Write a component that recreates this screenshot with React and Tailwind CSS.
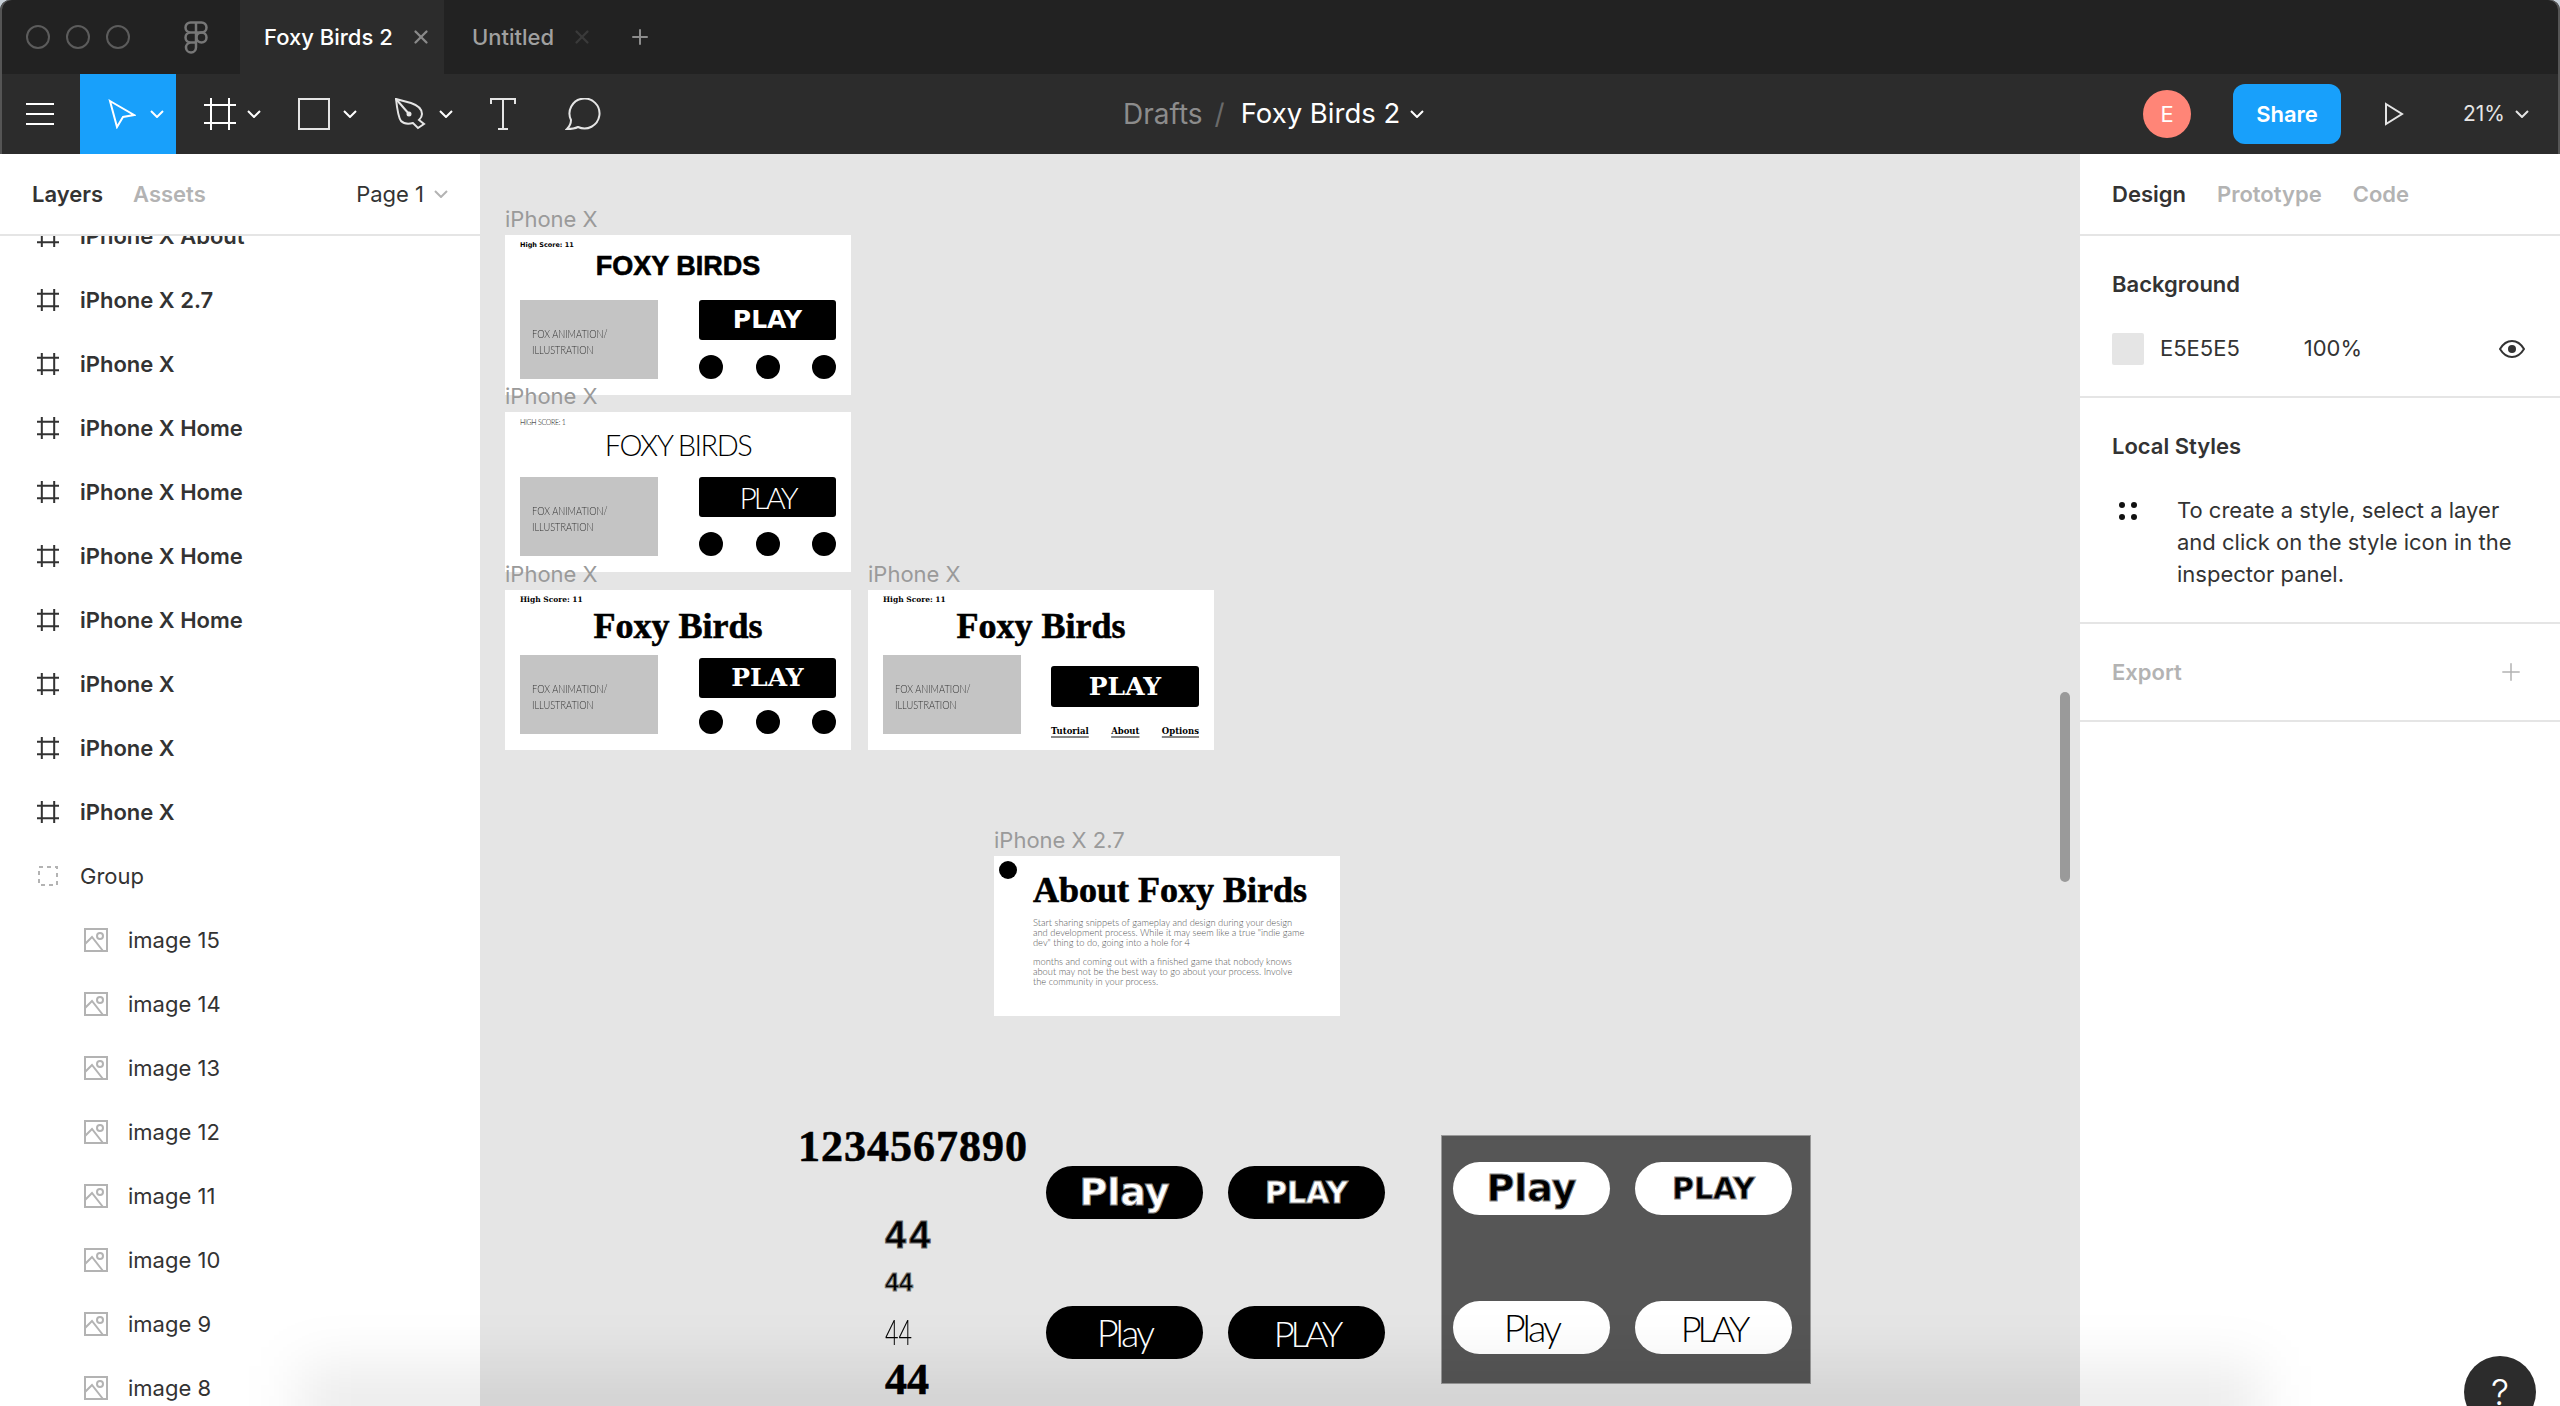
import { Plus, X } from "lucide-react";

const sans = "font-['Inter','Liberation_Sans',sans-serif]";
const heavy = "font-['DejaVu_Sans','Liberation_Sans',sans-serif] font-bold";
const heavySerif = "font-['DejaVu_Serif','Liberation_Serif',serif] font-bold";
const fatSerif = "font-['Liberation_Serif','DejaVu_Serif',serif] font-bold [-webkit-text-stroke:0.6px_#000]";
const fatSans = "font-['Liberation_Sans','DejaVu_Sans',sans-serif] font-bold [-webkit-text-stroke:0.6px_#000]";
const thin = "font-['Lato','Liberation_Sans',sans-serif] font-light";

const layers = [
  "iPhone X About",
  "iPhone X 2.7",
  "iPhone X",
  "iPhone X Home",
  "iPhone X Home",
  "iPhone X Home",
  "iPhone X Home",
  "iPhone X",
  "iPhone X",
  "iPhone X",
];
const images = ["image 15", "image 14", "image 13", "image 12", "image 11", "image 10", "image 9", "image 8"];

function Chevron({ className = "", color = "#fff" }) {
  return (
    <svg width="14" height="8" viewBox="0 0 14 8" fill="none" className={className}>
      <path d="M1 1l6 6 6-6" stroke={color} strokeWidth="2" />
    </svg>
  );
}

function FrameIcon({ size = 32, stroke = 2, color = "#fff" }) {
  return (
    <svg width={size} height={size} viewBox="0 0 32 32" fill="none" stroke={color} strokeWidth={stroke * (32 / size)}>
      <path d="M7 0v32M25 0v32M0 7h32M0 25h32" />
    </svg>
  );
}

function Layer({ name }) {
  return (
    <div className="h-16 shrink-0 flex items-center pl-[37px]">
      <FrameIcon size={22} color="#333" />
      <span className="ml-[21px] text-[22px] font-semibold text-[#333]">{name}</span>
    </div>
  );
}

function ImageLayer({ name }) {
  return (
    <div className="h-16 shrink-0 flex items-center pl-[84px]">
      <svg width="24" height="24" viewBox="0 0 24 24" fill="none" stroke="#b3b3b3" strokeWidth="2">
        <rect x="1" y="1" width="22" height="22" />
        <path d="M1 16l7-7 11 14" />
        <circle cx="16" cy="8" r="3" />
      </svg>
      <span className="ml-[20px] text-[22px] text-[#333]">{name}</span>
    </div>
  );
}

function Sidebar() {
  return (
    <aside className="w-[480px] shrink-0 bg-white flex flex-col overflow-hidden">
      <div className="relative z-10 h-[82px] shrink-0 bg-white border-b-2 border-[#e5e5e5] flex items-center pl-[32px] pr-[32px] text-[22px]">
        <span className="font-semibold text-[#333]">Layers</span>
        <span className="ml-[30px] font-semibold text-[#b3b3b3]">Assets</span>
        <span className="ml-auto text-[#333]">Page 1</span>
        <Chevron className="ml-[10px]" color="#b3b3b3" />
      </div>
      <div className="-mt-8 flex flex-col">
        {layers.map((name, i) => (
          <Layer key={i} name={name} />
        ))}
        <div className="h-16 shrink-0 flex items-center pl-[38px]">
          <svg width="20" height="20" viewBox="0 0 20 20" fill="none" stroke="#b3b3b3" strokeWidth="2" strokeDasharray="4 4">
            <rect x="1" y="1" width="18" height="18" />
          </svg>
          <span className="ml-[22px] text-[22px] text-[#333]">Group</span>
        </div>
        {images.map((name) => (
          <ImageLayer key={name} name={name} />
        ))}
      </div>
    </aside>
  );
}

function TitleBar() {
  return (
    <div className="h-[74px] shrink-0 bg-[#222] flex items-stretch text-[22px] font-medium">
      <div className="w-[240px] flex items-center pl-[26px] gap-[16px]">
        <span className="w-6 h-6 rounded-full border-2 border-[#5c5c5c]" />
        <span className="w-6 h-6 rounded-full border-2 border-[#5c5c5c]" />
        <span className="w-6 h-6 rounded-full border-2 border-[#5c5c5c]" />
        <svg width="24" height="33" viewBox="0 0 24 33" fill="none" stroke="#777" strokeWidth="2.5" className="ml-[38px]">
          <path d="M12 1.500H6.500a5 5 0 0 0 0 10H12zM12 1.500h5.500a5 5 0 0 1 0 10H12zM12 11.500H6.500a5 5 0 0 0 0 10H12zM12 21.500H6.500a5 5 0 1 0 5.500 5z" />
          <circle cx="17.500" cy="16.500" r="5" />
        </svg>
      </div>
      <div className="w-[204px] bg-[#2c2c2c] flex items-center pl-[24px] text-white">
        Foxy Birds 2
        <X size={22} strokeWidth={2.5} className="ml-[17px] text-[#8a8a8a]" />
      </div>
      <div className="flex items-center pl-[28px] text-[#a0a0a0]">
        Untitled
        <X size={22} strokeWidth={2.5} className="ml-[17px] text-[#3a3a3a]" />
        <Plus size={24} strokeWidth={2} className="ml-[35px] text-[#8c8c8c]" />
      </div>
    </div>
  );
}

function ToolBar() {
  return (
    <div className="relative h-20 shrink-0 bg-[#2c2c2c] flex items-center text-white">
      <div className="w-[80px] flex flex-col items-center gap-[8px]">
        <span className="w-[28px] h-[2px] bg-white" />
        <span className="w-[28px] h-[2px] bg-white" />
        <span className="w-[28px] h-[2px] bg-white" />
      </div>
      <div className="w-[96px] h-20 bg-[#18a0fb] flex items-center pl-[28px]">
        <svg width="28" height="30" viewBox="0 0 28 30" fill="none" stroke="#fff" strokeWidth="2">
          <path d="M2 2l24 14-11 2-6 10z" />
        </svg>
        <Chevron className="ml-[14px]" />
      </div>
      <div className="ml-[28px] flex items-center">
        <FrameIcon />
        <Chevron className="ml-[11px]" />
      </div>
      <span className="ml-[37px] w-[32px] h-[32px] border-2 border-[#e5e5e5]" />
      <Chevron className="ml-[13px]" />
      <svg width="31" height="32" viewBox="0 0 31 32" fill="none" stroke="#e5e5e5" strokeWidth="2" className="ml-[38px]">
        <path d="M1 1l15 4c6 2 11 6 11 11 0 3-2 5-3 6l5 4-6 4-5-5c-4 1-9 1-12-2C3 19 2 10 1 1z" />
        <path d="M1 1l13 15" />
        <circle cx="14" cy="16" r="2.500" fill="#e5e5e5" stroke="none" />
      </svg>
      <Chevron className="ml-[13px]" />
      <svg width="26" height="32" viewBox="0 0 26 32" fill="none" stroke="#e5e5e5" strokeWidth="2" className="ml-[37px]">
        <path d="M1 6V1h24v5M13 1v30M8 31h10" />
      </svg>
      <svg width="36" height="32" viewBox="0 0 36 32" fill="none" stroke="#e5e5e5" strokeWidth="2" className="ml-[49px]">
        <path d="M2 31c3-3 4-6 4-9a15 15 0 1 1 7 7c-4 2-7 2-11 2z" />
      </svg>

      <div className="absolute left-[1123px] top-0 h-20 flex items-center text-[28px]">
        <span className="text-[#8c8c8c]">Drafts</span>
        <span className="ml-[12px] text-[#6a6a6a]">/</span>
        <span className="ml-[16px] text-[27.500px]">Foxy Birds 2</span>
        <Chevron className="ml-[10px]" />
      </div>

      <div className="ml-auto flex items-center">
        <span className="w-12 h-12 rounded-full bg-[#ff8577] flex items-center justify-center text-[22px]">E</span>
        <span className="ml-[42px] w-[108px] h-[60px] rounded-[12px] bg-[#18a0fb] flex items-center justify-center text-[22px] font-semibold">
          Share
        </span>
        <svg width="20" height="24" viewBox="0 0 20 24" fill="none" stroke="#e5e5e5" strokeWidth="2" className="ml-[43px]">
          <path d="M2 2l16 10L2 22z" />
        </svg>
        <span className="ml-[59px] text-[21px] text-[#e5e5e5]">21%</span>
        <Chevron className="ml-[10px] mr-[31px]" color="#e5e5e5" />
      </div>
    </div>
  );
}

function GreyBox() {
  return (
    <div className={`w-[138px] h-[79px] shrink-0 bg-[#c4c4c4] pl-[12px] pt-[26px] text-[12px] leading-[16px] text-[#333] whitespace-nowrap ${thin}`}>
      <div className="origin-left scale-x-[0.77]">FOX ANIMATION/</div>
      <div className="origin-left scale-x-[0.77]">ILLUSTRATION</div>
    </div>
  );
}

function Dots() {
  return (
    <div className="mt-[15px] flex justify-between">
      <span className="w-6 h-6 rounded-full bg-black" />
      <span className="w-6 h-6 rounded-full bg-black" />
      <span className="w-6 h-6 rounded-full bg-black" />
    </div>
  );
}

function Frame({ pos, label, children }) {
  return (
    <div className={`absolute w-[346px] h-[160px] ${pos}`}>
      <div className="absolute -top-[30px] left-0 text-[22px] leading-[28px] text-[#9a9a9a] whitespace-nowrap z-10">{label}</div>
      {children}
    </div>
  );
}

function MenuScreen({ score, scoreClass, title, titleClass, play, playClass, buttonClass = "w-[137px] h-10", links }) {
  return (
    <div className="w-full h-full bg-white flex flex-col px-[15px]">
      <div className="h-[65px] shrink-0">
        <div className={`pt-[5px] leading-[10px] whitespace-nowrap ${scoreClass}`}>{score}</div>
        <div className={`text-center whitespace-nowrap ${titleClass}`}>{title}</div>
      </div>
      <div className="flex justify-between">
        <GreyBox />
        <div className="w-[137px] flex flex-col items-end">
          <div className={`${buttonClass} rounded-[3px] bg-black text-white flex items-center justify-center ${playClass}`}>{play}</div>
          {links ? (
            <div className={`w-[148px] shrink-0 mt-[18px] flex justify-between text-[8.500px] underline decoration-[#888] decoration-2 underline-offset-2 ${heavySerif}`}>
              <span>Tutorial</span>
              <span>About</span>
              <span>Options</span>
            </div>
          ) : (
            <div className="w-full">
              <Dots />
            </div>
          )}
        </div>
      </div>
    </div>
  );
}

function Pill({ pos, text, className }) {
  return (
    <div className={`absolute w-[157px] h-[53px] rounded-full flex items-center justify-center ${pos} ${className}`}>{text}</div>
  );
}

function Canvas() {
  return (
    <main className="relative flex-1 bg-[#e5e5e5] overflow-hidden text-black">
      {/* canvas offsets are relative to x=480, y=154 */}
      <Frame pos="left-[25px] top-[81px]" label="iPhone X">
        <MenuScreen
          score="High Score: 11"
          scoreClass={`text-[6.500px] ${heavy}`}
          title="FOXY BIRDS"
          titleClass={`text-[27px] leading-[32px] ${fatSans}`}
          play="PLAY"
          playClass={`text-[25px] ${heavy}`}
        />
      </Frame>
      <Frame pos="left-[25px] top-[258px]" label="iPhone X">
        <MenuScreen
          score="HIGH SCORE: 1"
          scoreClass={`text-[7px] tracking-[-0.300px] ${thin}`}
          title="FOXY BIRDS"
          titleClass={`text-[29px] leading-[36px] tracking-[-1.500px] ${thin}`}
          play="PLAY"
          playClass={`text-[30px] tracking-[-3px] ${thin}`}
        />
      </Frame>
      <Frame pos="left-[25px] top-[436px]" label="iPhone X">
        <MenuScreen
          score="High Score: 11"
          scoreClass={`text-[7.500px] ${heavySerif}`}
          title="Foxy Birds"
          titleClass={`text-[36px] leading-[42px] ${fatSerif}`}
          play="PLAY"
          playClass={`text-[25px] ${heavySerif}`}
          buttonClass="w-[137px] h-10 mt-[3px] -mb-[3px]"
        />
      </Frame>
      <Frame pos="left-[388px] top-[436px]" label="iPhone X">
        <MenuScreen
          score="High Score: 11"
          scoreClass={`text-[7.500px] ${heavySerif}`}
          title="Foxy Birds"
          titleClass={`text-[36px] leading-[42px] ${fatSerif}`}
          play="PLAY"
          playClass={`text-[25px] mt-[11px] ${heavySerif}`}
          buttonClass="w-[148px] h-[41px] shrink-0"
          links
        />
      </Frame>
      <Frame pos="left-[514px] top-[702px]" label="iPhone X 2.7">
        <div className="relative w-full h-full bg-white pl-[39px] pt-[15px]">
          <span className="absolute left-[5px] top-[5px] w-[18px] h-[18px] rounded-full bg-black" />
          <div className={`text-[36px] leading-[38px] whitespace-nowrap ${fatSerif}`}>About Foxy Birds</div>
          <div className="mt-[9px] text-[9.300px] leading-[9.800px] text-[#555] whitespace-nowrap font-['Lato',sans-serif] font-light">
            <div>Start sharing snippets of gameplay and design during your design</div>
            <div>and development process. While it may seem like a true "indie game</div>
            <div>dev" thing to do, going into a hole for 4</div>
            <div className="mt-[9.800px]">months and coming out with a finished game that nobody knows</div>
            <div>about may not be the best way to go about your process. Involve</div>
            <div>the community in your process.</div>
          </div>
        </div>
      </Frame>

      <div className={`absolute left-[318px] top-[970px] text-[44px] leading-[46px] tracking-[1px] whitespace-nowrap ${fatSerif}`}>
        1234567890
      </div>
      <div className={`absolute left-[405px] top-[1061px] text-[38px] leading-[40px] tracking-[3px] ${fatSans} [-webkit-text-stroke:1px_#666]`}>44</div>
      <div className={`absolute left-[405px] top-[1117px] text-[25px] leading-[22px] ${fatSans} [-webkit-text-stroke:1px_#777]`}>44</div>
      <div className={`absolute left-[405px] top-[1157px] text-[36px] leading-[40px] origin-left scale-x-[0.65] ${thin}`}>44</div>
      <div className={`absolute left-[405px] top-[1204px] text-[44px] leading-[44px] ${fatSerif}`}>44</div>

      <Pill pos="left-[566px] top-[1012px]" text="Play" className={`bg-black text-white text-[38px] [-webkit-text-stroke:1px_#888] ${heavy}`} />
      <Pill pos="left-[748px] top-[1012px]" text="PLAY" className={`bg-black text-white text-[30px] [-webkit-text-stroke:1px_#888] ${heavy}`} />
      <Pill pos="left-[566px] top-[1152px]" text="Play" className={`bg-black text-white text-[38px] tracking-[-3px] ${thin}`} />
      <Pill pos="left-[748px] top-[1152px]" text="PLAY" className={`bg-black text-white text-[36px] tracking-[-4px] ${thin}`} />

      <div className="absolute left-[961px] top-[981px] w-[370px] h-[249px] bg-[#565656] border border-[#999]" />
      <Pill pos="left-[973px] top-[1008px]" text="Play" className={`bg-white text-black text-[38px] [-webkit-text-stroke:1px_#888] ${heavy}`} />
      <Pill pos="left-[1155px] top-[1008px]" text="PLAY" className={`bg-white text-black text-[30px] [-webkit-text-stroke:1px_#888] ${heavy}`} />
      <Pill pos="left-[973px] top-[1147px]" text="Play" className={`bg-white text-black text-[38px] tracking-[-3px] ${thin}`} />
      <Pill pos="left-[1155px] top-[1147px]" text="PLAY" className={`bg-white text-black text-[36px] tracking-[-4px] ${thin}`} />

      <div className="absolute right-[10px] top-[538px] w-[10px] h-[190px] rounded-full bg-[#9a9a9a]" />
    </main>
  );
}

function RightPanel() {
  return (
    <aside className="relative w-[480px] shrink-0 bg-white flex flex-col text-[22px] text-[#333]">
      <div className="h-[82px] shrink-0 border-b-2 border-[#e5e5e5] flex items-center pl-[32px] font-semibold gap-[31px]">
        <span>Design</span>
        <span className="text-[#b3b3b3]">Prototype</span>
        <span className="text-[#b3b3b3]">Code</span>
      </div>
      <section className="h-[162px] shrink-0 border-b-2 border-[#e5e5e5] px-[32px] pt-[32px]">
        <div className="font-semibold leading-[32px]">Background</div>
        <div className="mt-[32px] flex items-center">
          <span className="w-8 h-8 rounded-[2px] bg-[#e5e5e5]" />
          <span className="ml-[16px]">E5E5E5</span>
          <span className="ml-[64px]">100%</span>
          <svg width="26" height="18" viewBox="0 0 26 18" fill="none" className="ml-auto mr-[3px]">
            <path d="M1 9c3-5 7-8 12-8s9 3 12 8c-3 5-7 8-12 8S4 14 1 9z" stroke="#333" strokeWidth="2" />
            <circle cx="13" cy="9" r="4" fill="#333" />
          </svg>
        </div>
      </section>
      <section className="h-[226px] shrink-0 border-b-2 border-[#e5e5e5] px-[32px] pt-[32px]">
        <div className="font-semibold leading-[32px]">Local Styles</div>
        <div className="mt-[32px] flex items-start">
          <div className="w-[18px] ml-[7px] mt-[8px] grid grid-cols-2 justify-between gap-y-[6px]">
            <span className="w-[6px] h-[6px] rounded-full bg-[#111]" />
            <span className="w-[6px] h-[6px] rounded-full bg-[#111] justify-self-end" />
            <span className="w-[6px] h-[6px] rounded-full bg-[#111]" />
            <span className="w-[6px] h-[6px] rounded-full bg-[#111] justify-self-end" />
          </div>
          <p className="ml-[40px] leading-[32px] whitespace-nowrap">
            To create a style, select a layer
            <br />
            and click on the style icon in the
            <br />
            inspector panel.
          </p>
        </div>
      </section>
      <section className="h-[98px] shrink-0 border-b-2 border-[#e5e5e5] pl-[32px] pr-[35px] flex items-center justify-between">
        <span className="font-semibold text-[#b3b3b3]">Export</span>
        <Plus size={28} strokeWidth={1.3} className="text-[#b3b3b3]" />
      </section>
      <div className="absolute z-20 right-[24px] bottom-[-22px] w-[72px] h-[72px] rounded-full bg-[#2c2c2c] flex items-center justify-center text-[36px] font-light text-white">
        ?
      </div>
    </aside>
  );
}

export default function App() {
  return (
    <div className="relative h-[1406px] w-[2560px] overflow-hidden bg-[#c8d0d8]">
      <div className={`h-full rounded-t-[10px] overflow-hidden flex flex-col ${sans}`}>
        <TitleBar />
        <ToolBar />
        <div className="flex-1 flex min-h-0">
          <Sidebar />
          <Canvas />
          <RightPanel />
        </div>
      </div>
      {/* window edge on the dark bars, dock shadow at the bottom */}
      <div className="absolute inset-x-0 top-0 h-[154px] rounded-t-[10px] shadow-[inset_2px_0_0_#555,inset_-2px_0_0_#555] pointer-events-none" />
      <div className="absolute left-[300px] right-[300px] -bottom-[40px] h-[80px] bg-black/8 blur-[28px] pointer-events-none" />
    </div>
  );
}
